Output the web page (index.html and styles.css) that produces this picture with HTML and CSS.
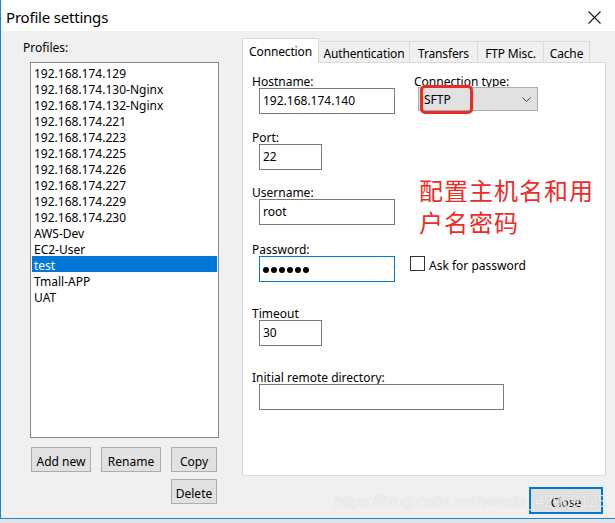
FILE: index.html
```html
<!DOCTYPE html>
<html>
<head>
<meta charset="utf-8">
<link rel="stylesheet" href="styles.css">
</head>
<body>
<div class="window">
  <div class="titlebar">
    <span class="title">Profile settings</span>
    <svg class="close-x" width="13" height="13" viewBox="0 0 13 13"><path d="M0.5 0.5 L12.5 12.5 M12.5 0.5 L0.5 12.5" stroke="#1a1a1a" stroke-width="1.1" fill="none"/></svg>
  </div>
  <div class="content">
    <div class="profiles">
      <div class="lbl">Profiles:</div>
      <ul class="list">
        <li>192.168.174.129</li>
        <li>192.168.174.130-Nginx</li>
        <li>192.168.174.132-Nginx</li>
        <li>192.168.174.221</li>
        <li>192.168.174.223</li>
        <li>192.168.174.225</li>
        <li>192.168.174.226</li>
        <li>192.168.174.227</li>
        <li>192.168.174.229</li>
        <li>192.168.174.230</li>
        <li>AWS-Dev</li>
        <li>EC2-User</li>
        <li class="sel">test</li>
        <li>Tmall-APP</li>
        <li>UAT</li>
      </ul>
      <div class="btnrow">
        <button class="btn w60">Add new</button>
        <button class="btn w60">Rename</button>
        <button class="btn w46">Copy</button>
      </div>
      <div class="btnrow end">
        <button class="btn w46">Delete</button>
      </div>
    </div>
    <div class="settings">
      <div class="tabs">
        <div class="tab active t-conn">Connection</div>
        <div class="tab t-auth">Authentication</div>
        <div class="tab t-trans">Transfers</div>
        <div class="tab t-ftp">FTP Misc.</div>
        <div class="tab t-cache">Cache</div>
      </div>
      <div class="pane">
        <div class="row">
          <div class="field wide">
            <div class="flbl">Hostname:</div>
            <div class="input w136">192.168.174.140</div>
          </div>
          <div class="field">
            <div class="flbl">Connection type:</div>
            <div class="select">
              <span>SFTP</span>
              <svg width="9" height="5" viewBox="0 0 9 5"><path d="M0.5 0.5 L4.5 4.5 L8.5 0.5" stroke="#444" stroke-width="1" fill="none"/></svg>
            </div>
          </div>
        </div>
        <div class="field mt14">
          <div class="flbl">Port:</div>
          <div class="input w63">22</div>
        </div>
        <div class="field mt13">
          <div class="flbl">Username:</div>
          <div class="input w136">root</div>
        </div>
        <div class="row mt15">
          <div class="field wide">
            <div class="flbl">Password:</div>
            <div class="input w136 focus"><span class="dots"><i></i><i></i><i></i><i></i><i></i><i></i></span></div>
          </div>
          <div class="check">
            <span class="box"></span>
            <span class="check-lbl">Ask for password</span>
          </div>
        </div>
        <div class="field mt22">
          <div class="flbl">Timeout</div>
          <div class="input w63">30</div>
        </div>
        <div class="field mt22">
          <div class="flbl">Initial remote directory:</div>
          <div class="input w245"></div>
        </div>
      </div>
      <div class="footer">
        <button class="btn closebtn">Close</button>
      </div>
    </div>
  </div>
  <div class="redbox"></div>
  <div class="note">配置主机名和用<br>户名密码</div>
  <div class="watermark">https://blog.csdn.net/weixin_42969125</div>
</div>
</body>
</html>
```

FILE: styles.css
```css
html, body {
  margin: 0;
  padding: 0;
  background: #e4e4e4;
}
body {
  font-family: "Noto Sans", "Open Sans", sans-serif;
  font-size: 12px;
  color: #000;
}
.window {
  position: relative;
  width: 614px;
  height: 518px;
  border-left: 1px solid #1883d7;
  border-bottom: 1px solid #1883d7;
  background: #f0f0f0;
}
.titlebar {
  height: 31px;
  background: #fff;
  display: flex;
  align-items: center;
  justify-content: space-between;
  padding: 0 14px 0 5px;
}
.title {
  font-size: 15px;
  line-height: 20px;
  letter-spacing: -0.2px;
  margin-top: 3px;
}
.close-x {
  display: block;
  margin-top: 3px;
}
.content {
  display: flex;
  padding: 7px 0 0 22px;
}
.profiles {
  width: 197px;
  display: flex;
  flex-direction: column;
}
.lbl {
  height: 16px;
  box-sizing: border-box;
  padding-top: 4px;
  line-height: 12px;
}
.list {
  list-style: none;
  margin: 8px 0 0 7px;
  padding: 1px;
  width: 189px;
  height: 376px;
  box-sizing: border-box;
  border: 1px solid #828790;
  background: #fff;
}
.list li {
  height: 16px;
  box-sizing: border-box;
  padding: 4px 0 0 2px;
  line-height: 12px;
  white-space: nowrap;
}
.list li.sel {
  background: #0078d7;
  color: #fff;
}
.btnrow {
  display: flex;
  gap: 10px;
  margin: 9px 0 0 8px;
  width: 186px;
}
.btnrow.end {
  justify-content: flex-end;
  margin-top: 7px;
}
.btn {
  height: 25px;
  box-sizing: border-box;
  border: 1px solid #adadad;
  background: #e1e1e1;
  font-family: inherit;
  font-size: 12px;
  color: #000;
  padding: 4px 0 0 0;
}
.w60 { width: 60px; }
.w46 { width: 46px; }
.settings {
  margin-left: 22px;
  width: 364px;
  display: flex;
  flex-direction: column;
}
.tabs {
  display: flex;
  align-items: flex-end;
  height: 24px;
  position: relative;
  z-index: 1;
}
.tab {
  height: 21px;
  box-sizing: border-box;
  padding-top: 4px;
  line-height: 16px;
  text-align: center;
  border: 1px solid #d9d9d9;
  border-left: none;
  border-bottom: none;
  background: #f0f0f0;
  white-space: nowrap;
  letter-spacing: -0.15px;
}
.tab.active {
  height: 25px;
  margin-bottom: -1px;
  padding-top: 4px;
  line-height: 18px;
  background: #fff;
  border-left: 1px solid #d9d9d9;
}
.t-conn { width: 77px; }
.t-auth { width: 91px; }
.t-trans { width: 68px; }
.t-ftp { width: 66px; }
.t-cache { width: 46px; }
.pane {
  height: 414px;
  box-sizing: border-box;
  border: 1px solid #d9d9d9;
  background: #fff;
  padding: 9px 0 0 9px;
}
.row {
  display: flex;
  align-items: flex-start;
}
.field {
  display: flex;
  flex-direction: column;
  align-items: flex-start;
}
.field.wide {
  width: 143px;
  margin-right: 19px;
}
.flbl {
  height: 16px;
  box-sizing: border-box;
  padding-top: 4px;
  line-height: 12px;
  white-space: nowrap;
}
.input {
  margin-left: 7px;
  height: 26px;
  box-sizing: border-box;
  border: 1px solid #7a7a7a;
  padding: 0 3px;
  line-height: 23px;
  background: #fff;
}
.input.focus {
  border-color: #0078d7;
  display: flex;
  align-items: center;
}
.w136 { width: 136px; }
.w63 { width: 63px; }
.w245 { width: 245px; }
.mt13 { margin-top: 13px; }
.mt14 { margin-top: 14px; }
.mt15 { margin-top: 15px; }
.mt22 { margin-top: 22px; }
.dots {
  display: flex;
  gap: 2px;
  margin-top: 1px;
}
.dots i {
  display: block;
  width: 6px;
  height: 6px;
  border-radius: 50%;
  background: #000;
}
.select {
  margin: -1px 0 0 4px;
  width: 120px;
  height: 24px;
  box-sizing: border-box;
  border: 1px solid #adadad;
  background: #e1e1e1;
  display: flex;
  align-items: center;
  justify-content: space-between;
  padding: 0 6px 0 5px;
}
.select svg {
  display: block;
}
.check {
  display: flex;
  align-items: flex-start;
  margin-top: 16px;
  margin-left: -4px;
  height: 15px;
}
.check .box {
  width: 15px;
  height: 15px;
  box-sizing: border-box;
  border: 1px solid #333;
  background: #fff;
  margin-right: 4px;
}
.check-lbl {
  height: 15px;
  box-sizing: border-box;
  padding-top: 3px;
  line-height: 13px;
  white-space: nowrap;
}
.footer {
  display: flex;
  justify-content: flex-end;
  padding: 11px 3px 0 0;
}
.closebtn {
  width: 74px;
  height: 27px;
  border: 2px solid #0078d7;
}
.redbox {
  position: absolute;
  left: 419px;
  top: 85px;
  width: 53px;
  height: 29px;
  box-sizing: border-box;
  border: 3px solid #ea2a24;
  border-radius: 5px;
}
.note {
  position: absolute;
  left: 418px;
  top: 174px;
  font-family: "Noto Sans CJK SC", sans-serif;
  font-size: 24px;
  line-height: 32px;
  letter-spacing: 1px;
  color: #ee2b26;
}
.watermark {
  position: absolute;
  left: 333px;
  top: 492px;
  font-family: "Liberation Sans", sans-serif;
  font-size: 16px;
  line-height: 20px;
  color: rgba(255, 255, 255, 0.8);
  text-shadow: 0 0 1px rgba(0, 0, 0, 0.22);
  white-space: nowrap;
  pointer-events: none;
}
```
